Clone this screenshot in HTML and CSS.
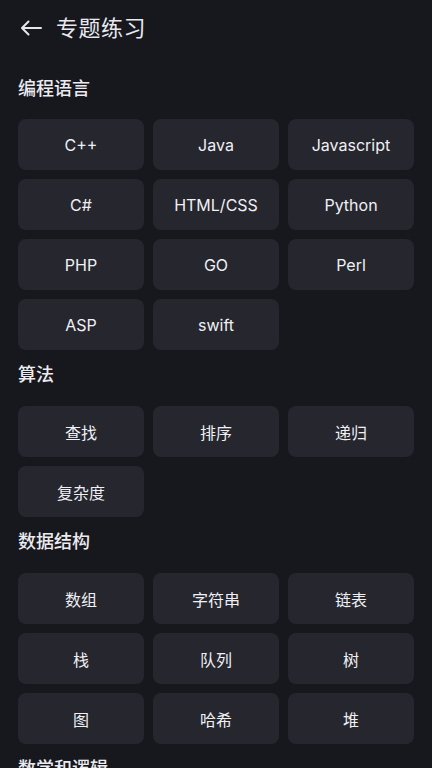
FILE: index.html
```html
<!DOCTYPE html>
<html lang="zh">
<head>
<meta charset="utf-8">
<link rel="stylesheet" href="styles.css">
</head>
<body>
<div class="page">
  <header class="topbar">
    <svg class="back" width="22" height="16" viewBox="0 0 22 16"><path d="M21 8H2M8.5 1.5L2 8l6.5 6.5" fill="none" stroke="#e6e6ea" stroke-width="2" stroke-linecap="round" stroke-linejoin="round"/></svg>
    <h1 class="title">专题练习</h1>
  </header>
  <section class="section">
    <h2 class="sec-title">编程语言</h2>
    <div class="grid">
      <div class="item">C++</div><div class="item">Java</div><div class="item">Javascript</div>
      <div class="item">C#</div><div class="item">HTML/CSS</div><div class="item">Python</div>
      <div class="item">PHP</div><div class="item">GO</div><div class="item">Perl</div>
      <div class="item">ASP</div><div class="item">swift</div>
    </div>
  </section>
  <section class="section">
    <h2 class="sec-title">算法</h2>
    <div class="grid">
      <div class="item">查找</div><div class="item">排序</div><div class="item">递归</div>
      <div class="item">复杂度</div>
    </div>
  </section>
  <section class="section">
    <h2 class="sec-title">数据结构</h2>
    <div class="grid">
      <div class="item">数组</div><div class="item">字符串</div><div class="item">链表</div>
      <div class="item">栈</div><div class="item">队列</div><div class="item">树</div>
      <div class="item">图</div><div class="item">哈希</div><div class="item">堆</div>
    </div>
  </section>
  <section class="section">
    <h2 class="sec-title">数学和逻辑</h2>
    <div class="grid">
      <div class="item">概率</div><div class="item">逻辑</div><div class="item">数论</div>
    </div>
  </section>
</div>
</body>
</html>
```
FILE: styles.css
```css
* { box-sizing: border-box; }
html, body { margin: 0; padding: 0; background: #17171e; }
body {
  font-family: "Inter", "Noto Sans CJK SC", "Noto Sans", sans-serif;
  color: #eeeef2;
  width: 432px;
  height: 768px;
  overflow: hidden;
}
.page { padding: 0 18px; }
.topbar {
  height: 56px;
  display: flex;
  align-items: center;
  gap: 14px;
  padding-left: 2px;
}
.back { display: block; }
.title {
  margin: 0;
  font-size: 22px;
  font-weight: 400;
  line-height: 28px;
  color: #e9e9ee;
  letter-spacing: 0.5px;
}
.section { padding-top: 21px; }
.section + .section { padding-top: 13px; }
.sec-title {
  margin: 0 0 18px;
  font-size: 18px;
  font-weight: 500;
  line-height: 24px;
  color: #ececf0;
}
.section + .section .sec-title { margin-bottom: 19px; }
.grid {
  display: grid;
  grid-template-columns: repeat(3, 126px);
  gap: 9px;
}
.item {
  height: 51px;
  background: #25262e;
  border-radius: 8px;
  display: flex;
  align-items: center;
  justify-content: center;
  font-size: 16px;
  color: #f0f0f4;
}
```
